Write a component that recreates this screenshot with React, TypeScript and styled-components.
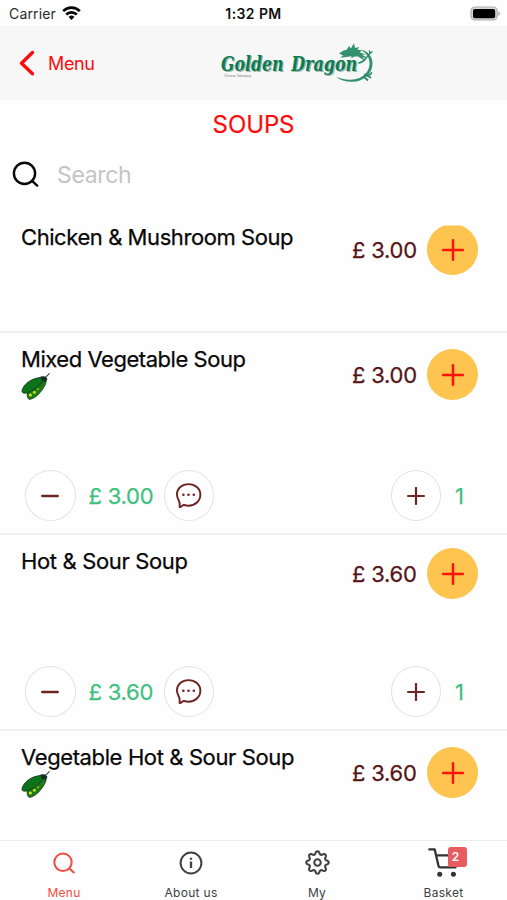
import React from "react";
import styled, { createGlobalStyle } from "styled-components";

const GlobalStyle = createGlobalStyle`
  * { box-sizing: border-box; }
  html, body { margin: 0; padding: 0; background: #fefefe; }
  body { font-family: Inter, "Liberation Sans", sans-serif; overflow: hidden; }
  button { font: inherit; border: 0; padding: 0; background: none; color: inherit; }
  svg { display: block; flex: none; }
`;

const Screen = styled.div`
  width: 507px;
  height: 900px;
  display: flex;
  flex-direction: column;
  background: #fefefe;
  overflow: hidden;
`;

const StatusBar = styled.div`
  height: 26px;
  flex: none;
  display: grid;
  grid-template-columns: 1fr auto 1fr;
  align-items: center;
  padding: 1px 6px 0 9px;
`;
const Carrier = styled.div`
  display: flex;
  align-items: center;
  gap: 6px;
  font-size: 14px;
  letter-spacing: 0.15px;
  color: #2a2a2a;
`;
const Clock = styled.div`
  font-size: 14px;
  font-weight: 600;
  letter-spacing: 0.4px;
  color: #111;
  margin-right: 3px;
`;
const Battery = styled.div`
  justify-self: end;
`;

const Header = styled.header`
  height: 74px;
  flex: none;
  display: flex;
  align-items: center;
  background: #f7f7f7;
`;
const Back = styled.button`
  display: flex;
  align-items: center;
  width: 200px;
  padding-left: 18px;
  gap: 12px;
  color: #fb0d0d;
  font-size: 18px;
  line-height: 24px;
`;
const BackLabel = styled.span`
  padding-top: 2px;
  letter-spacing: -0.35px;
`;
const Logo = styled.div`
  margin-left: 15px;
`;

const Title = styled.h1`
  margin: 0;
  height: 50px;
  flex: none;
  text-align: center;
  font-size: 24px;
  line-height: 49px;
  font-weight: 400;
  letter-spacing: -0.1px;
  color: #fb0d0d;
  -webkit-text-stroke: 0.2px currentColor;
`;
const SearchBar = styled.div`
  height: 60px;
  flex: none;
  display: flex;
  align-items: flex-start;
  padding: 9px 12px 0;
  gap: 18px;
`;
const SearchInput = styled.input`
  border: 0;
  outline: 0;
  padding: 0;
  width: 300px;
  height: 32px;
  font: 400 23px/32px Inter, sans-serif;
  letter-spacing: -0.35px;
  background: none;
  &::placeholder { color: #c4c4c6; opacity: 1; }
`;

const List = styled.main`
  flex: 1;
  min-height: 0;
  overflow: hidden;
`;
const Row = styled.section<{ $height: number }>`
  height: ${(p) => p.$height}px;
  display: flex;
  flex-direction: column;
  border-bottom: 2px solid #f1f1f2;
`;
const RowTop = styled.div`
  flex: 1;
  display: flex;
  align-items: flex-start;
  padding: 0 29px 0 21px;
`;
const Info = styled.div<{ $top: number }>`
  flex: 1;
  padding-top: ${(p) => p.$top}px;
`;
const Name = styled.h2<{ $spacing: number }>`
  margin: 0;
  font-size: 22px;
  line-height: 28px;
  font-weight: 400;
  letter-spacing: ${(p) => p.$spacing}px;
  color: #080808;
  white-space: nowrap;
  -webkit-text-stroke: 0.25px #080808;
`;
const PriceGroup = styled.div<{ $offset: number }>`
  display: flex;
  align-items: center;
  gap: 10px;
  margin-top: ${(p) => p.$offset}px;
`;
const Price = styled.span<{ $green?: boolean }>`
  width: 65px;
  font-size: 22px;
  line-height: 28px;
  white-space: nowrap;
  letter-spacing: -0.25px;
  color: ${(p) => (p.$green ? "#3dc17f" : "#561417")};
  -webkit-text-stroke: 0.25px currentColor;
`;
const AddButton = styled.button<{ $clipped?: boolean }>`
  width: 51px;
  height: 51px;
  border-radius: 50%;
  display: grid;
  place-items: center;
  background: #fdc450;
  clip-path: ${(p) => (p.$clipped ? "inset(1.5px 0 0 0)" : "none")};
`;
const Controls = styled.div<{ $bottom: number }>`
  display: flex;
  align-items: center;
  padding: 0 42px ${(p) => p.$bottom}px 25px;
`;
const Outline = styled.button`
  width: 50.5px;
  height: 51px;
  border-radius: 50%;
  border: 1.3px solid #e0e2e3;
  display: grid;
  place-items: center;
  background: #fff;
`;
const LinePrice = styled.div`
  display: flex;
  margin: 0 10px 0 13px;
`;
const Quantity = styled.span`
  width: 24px;
  padding-left: 14px;
  font-size: 22px;
  line-height: 28px;
  color: #3dc17f;
  -webkit-text-stroke: 0.25px currentColor;
`;
const Spacer = styled.div`
  flex: 1;
`;

const TabBar = styled.nav`
  height: 60px;
  flex: none;
  display: grid;
  grid-template-columns: 128px 126px 126px 127px;
  border-top: 1px solid #ececec;
`;
const Tab = styled.button<{ $active?: boolean }>`
  display: flex;
  flex-direction: column;
  align-items: center;
  color: ${(p) => (p.$active ? "#ef4c42" : "#414141")};
`;
const TabIcon = styled.div`
  position: relative;
  height: 43px;
  display: flex;
  align-items: center;
`;
const TabLabel = styled.span`
  font-size: 12px;
  line-height: 17px;
  letter-spacing: 0.3px;
`;
const Badge = styled.span`
  position: absolute;
  left: 20px;
  top: 6px;
  width: 19px;
  height: 20px;
  border-radius: 3px;
  background: #e75c60;
  color: #fff;
  font-size: 12px;
  font-weight: 600;
  line-height: 20px;
  text-align: center;
  padding-right: 4px;
`;

const PlusIcon = ({ size, color, width }: { size: number; color: string; width: number }) => (
  <svg width={size} height={size} viewBox="0 0 22 22" stroke={color} strokeWidth={width} strokeLinecap="round">
    <path d="M1.2 11h19.6M11 1.2v19.6" />
  </svg>
);

const MinusIcon = () => (
  <svg width="18" height="4" stroke="#6d2422" strokeWidth="2.3" strokeLinecap="round">
    <path d="M1.2 2h15.6" />
  </svg>
);

const ChatIcon = () => (
  <svg width="27" height="27" viewBox="0 0 28 28" fill="none" stroke="#6d2422" strokeWidth="2">
    <path
      d="M3.6 18.4A11.2 11.2 0 0 1 2 13C2 6.7 7.3 2.2 14 2.2S26.3 6.7 26.3 13.2 20.8 24.6 14.2 24.6c-2.1 0-3.4-.3-4.9-.9-1.3.1-2.2 1.8-4 2.3-.4 0-.6-.3-.5-.7.5-1.8.4-3.8-1.2-6.9Z"
      strokeLinejoin="round"
    />
    <g fill="#6d2422" stroke="none">
      <circle cx="8.7" cy="13.2" r="1.35" />
      <circle cx="14" cy="13.2" r="1.35" />
      <circle cx="19.5" cy="13.2" r="1.35" />
    </g>
  </svg>
);

const SearchIcon = () => (
  <svg width="27" height="32" viewBox="0 0 27 32" fill="none" stroke="#080808" strokeWidth="2.4" strokeLinecap="round">
    <circle cx="12.5" cy="14.4" r="10.6" />
    <path d="m20.3 22.2 4.9 4.4" />
  </svg>
);

const PeaPod = () => (
  <svg width="30" height="28" viewBox="0 0 30 28">
    <path d="M6.6 18.6C12.8 16.9 18.6 11.6 24.7 6.6c1 1.9.2 4.2-1.5 7.1-3.6 6-9 12.2-15.1 12.7-1.7-1.1-2.6-4.4-1.5-7.8Z" fill="#1c7a1b" stroke="#173f19" strokeWidth=".8" />
    <path d="M1.1 17.2C2.6 11.9 7.6 8 13 5.9c2.9-1.1 6.6-1.5 9.8-2 1.1 1.2.5 2.6-.6 4-3.6 4.6-8.8 9.1-14.7 11.5-2.9.9-5.1 1.2-6.1-.1-.4-.5-.5-1.2-.3-2.1Z" fill="#0c7418" stroke="#153c1b" strokeWidth=".9" />
    <circle cx="9.4" cy="22" r="1.5" fill="#d4ea18" />
    <circle cx="13.4" cy="19.2" r="1.5" fill="#c8df19" />
    <circle cx="17" cy="16.2" r="1" fill="#9cc41a" />
    <path d="M24.4 4.3 28.3.6" stroke="#443b42" strokeWidth="1.1" strokeLinecap="round" />
    <path d="m19.5 3.5 4.8-.1 2.2 2.7-1.8 3-4-1.4Z" fill="#142f1d" />
  </svg>
);

const DragonLogo = () => (
  <svg width="166" height="44" viewBox="0 0 166 44" role="img">
    <g fill="#35906f">
      <path d="M124 12.5l4.5-3 3.2-.8L134 5l1.8 2.6L139 2.2l1 4.8 4.2-1-1.8 2.6 4.6 1-2.5 1.6 6.5 2.4-4 .2 5.5 3.2-5.2-.6 3.4 4.2-7.6-5.2-3.7.2-3.2 1.6.4-1.9-5.6.6-6 .8 3.2-2.2Z" />
      <path d="M145.5 8.8c7.5.8 12.2 7 12 14.2-.2 8.5-6.8 15.2-15 17.2-8 1.6-16.2.2-21.3-4.4 7 3 14.6 3.6 20.6 2 7.2-1.8 12.3-7.6 12.7-14.6.2-6.2-2.8-11.4-9-14.4Z" />
    </g>
    <g stroke="#2b8b67" fill="none" strokeLinecap="round" strokeLinejoin="round">
      <path d="M144 22c3-.8 5.5-2.3 7.2-5.5" strokeWidth="1.6" />
      <path d="m152 16 3-3.8M155 12.5l-.6-2.6M155 12.5l2-1.8" strokeWidth="1.3" />
      <path d="M150 33.5c2 1.6 4.8.8 6.5-1.5m-6.5 1.5 5.5 3m-6.5-.5 3.5 3" strokeWidth="1.7" />
    </g>
    <g fontFamily="DejaVu Serif Condensed, DejaVu Serif" fontSize="21" fontWeight="700" fontStyle="italic">
      <g fill="#a4b8ae" aria-hidden="true">
        <text x="7.2" y="30.7" textLength="62.5" lengthAdjust="spacingAndGlyphs">Golden</text>
        <text x="77.4" y="30.7" textLength="66" lengthAdjust="spacingAndGlyphs">Dragon</text>
      </g>
      <g fill="#0b7c52">
        <text x="6" y="29.7" textLength="62.5" lengthAdjust="spacingAndGlyphs">Golden</text>
        <text x="76.2" y="29.7" textLength="66" lengthAdjust="spacingAndGlyphs">Dragon</text>
      </g>
    </g>
    <text x="9" y="36" fontFamily="Liberation Sans" fontSize="3.2" fill="#777" textLength="27">Chinese Takeaway</text>
  </svg>
);

const WifiIcon = () => (
  <svg width="19" height="15" viewBox="0 0 19 15" fill="none" stroke="#050505" strokeWidth="2.7">
    <path d="M1.2 5.1a11.8 11.8 0 0 1 16.6 0M4.2 8.5a7.5 7.5 0 0 1 10.6 0" />
    <path d="M9.5 14 6.6 11a4.2 4.2 0 0 1 5.8 0Z" fill="#050505" stroke="none" />
  </svg>
);

const BatteryIcon = () => (
  <svg width="31" height="16" viewBox="0 0 31 16">
    <rect x="1" y="1" width="26.2" height="13" rx="4" fill="#d8d8d8" stroke="#aeaeae" strokeWidth="1.2" />
    <rect x="3" y="2.9" width="22.2" height="9.3" rx="2" fill="#000" />
    <path d="M28.4 5.4c2.2.8 2.2 3.6 0 4.4Z" fill="#a8a8a8" />
  </svg>
);

const TabSearchIcon = () => (
  <svg width="22" height="22" viewBox="0 0 22 22" fill="none" stroke="currentColor" strokeWidth="2" strokeLinecap="round">
    <circle cx="10" cy="10.3" r="8.7" />
    <path d="m16.5 16.6 4.2 3.9" />
  </svg>
);

const InfoIcon = () => (
  <svg width="24" height="24" viewBox="0 0 24 24" fill="none" stroke="currentColor" strokeWidth="2">
    <circle cx="12" cy="12" r="10.4" />
    <path d="M12 10.6v6.4M12 6.7v2" strokeWidth="2.3" />
  </svg>
);

const gearPath = Array.from({ length: 96 }, (_, i) => {
  const angle = (i / 96) * Math.PI * 2;
  const wave = Math.cos(angle * 8);
  const radius = 9.4 + Math.sign(wave) * Math.pow(Math.abs(wave), 0.75) * 1.4;
  return `${i ? "L" : "M"}${(12 + Math.sin(angle) * radius).toFixed(2)} ${(12 - Math.cos(angle) * radius).toFixed(2)}`;
}).join("") + "Z";

const GearIcon = () => (
  <svg width="25" height="25" viewBox="0 0 24 24" fill="none" stroke="currentColor" strokeWidth="2" strokeLinejoin="round">
    <path d={gearPath} />
    <circle cx="12" cy="12" r="3.1" />
  </svg>
);

const CartIcon = () => (
  <svg width="31" height="31" viewBox="0 0 31 31" fill="none" stroke="#333" strokeWidth="2.3" strokeLinecap="round" strokeLinejoin="round">
    <path d="M1.3 2.4h5.4l3.9 16.8q.3 1.2 1.5 1.2h15.4M8 8.4h20.5" />
    <circle cx="11.7" cy="27.2" r="2.5" fill="#333" stroke="none" />
    <circle cx="25.4" cy="27.2" r="2.5" fill="#333" stroke="none" />
  </svg>
);

type Soup = {
  name: string;
  spacing: number;
  price: string;
  height: number;
  top: number;
  offset: number;
  controlsBottom?: number;
  vegetarian?: boolean;
  clipped?: boolean;
};

const soups: Soup[] = [
  { name: "Chicken & Mushroom Soup", spacing: -0.43, price: "£ 3.00", height: 123, top: 13, offset: 14, clipped: true },
  { name: "Mixed Vegetable Soup", spacing: -0.46, price: "£ 3.00", height: 202, top: 12, offset: 16, controlsBottom: 12, vegetarian: true },
  { name: "Hot & Sour Soup", spacing: -0.35, price: "£ 3.60", height: 196, top: 12, offset: 13, controlsBottom: 12 },
  { name: "Vegetable Hot & Sour Soup", spacing: -0.38, price: "£ 3.60", height: 196, top: 12, offset: 16, vegetarian: true },
];

const SoupRow = ({ soup }: { soup: Soup }) => (
  <Row $height={soup.height}>
    <RowTop>
      <Info $top={soup.top}>
        <Name $spacing={soup.spacing}>{soup.name}</Name>
        {soup.vegetarian && <PeaPod />}
      </Info>
      <PriceGroup $offset={soup.offset}>
        <Price>{soup.price}</Price>
        <AddButton $clipped={soup.clipped} aria-label="Add">
          <PlusIcon size={22} color="#fb1508" width={2.5} />
        </AddButton>
      </PriceGroup>
    </RowTop>
    {soup.controlsBottom && (
      <Controls $bottom={soup.controlsBottom}>
        <Outline aria-label="Remove one"><MinusIcon /></Outline>
        <LinePrice><Price $green>{soup.price}</Price></LinePrice>
        <Outline aria-label="Comment"><ChatIcon /></Outline>
        <Spacer />
        <Outline aria-label="Add one"><PlusIcon size={18} color="#6d2422" width={2.7} /></Outline>
        <Quantity>1</Quantity>
      </Controls>
    )}
  </Row>
);

export default function App() {
  return (
    <Screen>
      <GlobalStyle />
      <StatusBar>
        <Carrier>Carrier <WifiIcon /></Carrier>
        <Clock>1:32 PM</Clock>
        <Battery><BatteryIcon /></Battery>
      </StatusBar>
      <Header>
        <Back>
          <svg width="18" height="28" viewBox="0 0 18 28" fill="none" stroke="currentColor" strokeWidth="3.4" strokeLinecap="round" strokeLinejoin="round">
            <path d="M14.5 3.5 3.5 14.2l11 10.6" />
          </svg>
          <BackLabel>Menu</BackLabel>
        </Back>
        <Logo><DragonLogo /></Logo>
      </Header>
      <Title>SOUPS</Title>
      <SearchBar>
        <SearchIcon />
        <SearchInput placeholder="Search" />
      </SearchBar>
      <List>
        {soups.map((soup) => <SoupRow key={soup.name} soup={soup} />)}
      </List>
      <TabBar>
        <Tab $active><TabIcon><TabSearchIcon /></TabIcon><TabLabel>Menu</TabLabel></Tab>
        <Tab><TabIcon><InfoIcon /></TabIcon><TabLabel>About us</TabLabel></Tab>
        <Tab><TabIcon><GearIcon /></TabIcon><TabLabel>My</TabLabel></Tab>
        <Tab><TabIcon><CartIcon /><Badge>2</Badge></TabIcon><TabLabel>Basket</TabLabel></Tab>
      </TabBar>
    </Screen>
  );
}
